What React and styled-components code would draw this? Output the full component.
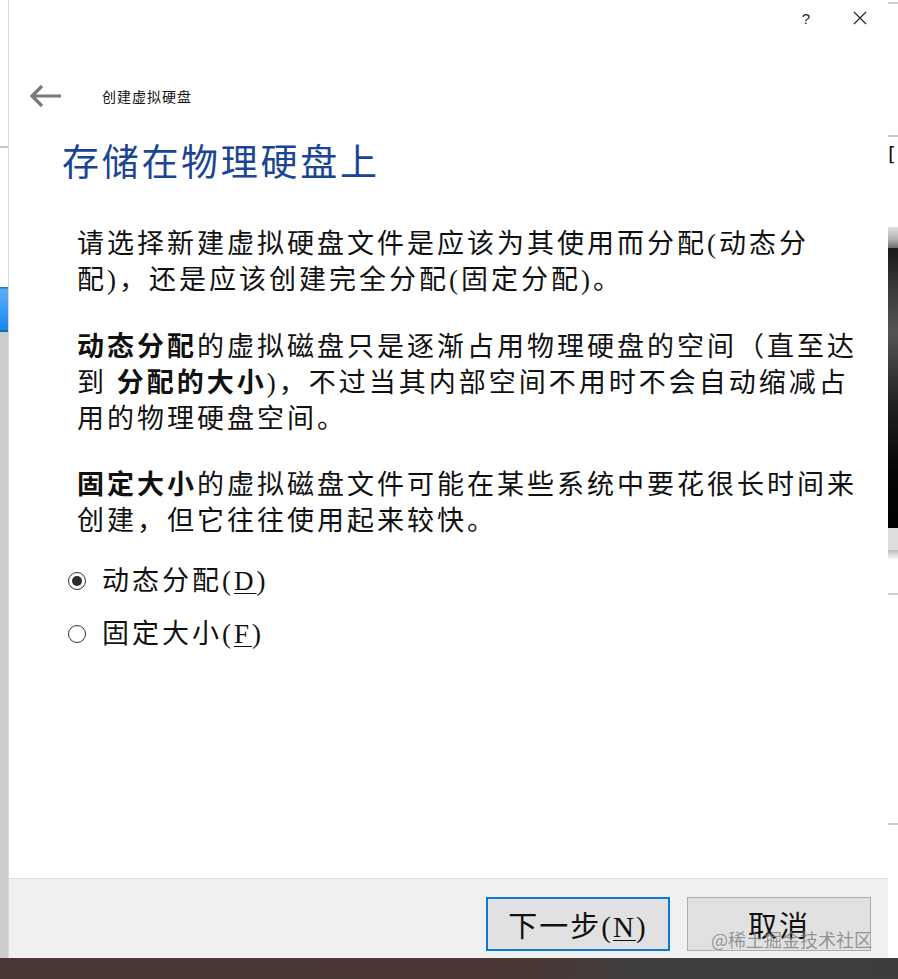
import React from 'react';
import styled, { createGlobalStyle } from 'styled-components';

const GlobalStyle = createGlobalStyle`
    html, body {
        margin: 0;
        padding: 0;
        background: #ffffff;
    }
    body {
        width: 898px;
        height: 979px;
        overflow: hidden;
        font-family: "Liberation Serif", "Noto Sans CJK SC", serif;
    }
`;

const Screen = styled.div`
    display: flex;
    flex-direction: column;
    width: 898px;
    height: 979px;
`;

const MainRow = styled.div`
    display: flex;
    height: 958px;
`;

const TaskBar = styled.div`
    height: 21px;
    background: linear-gradient(90deg, #4a3734 0%, #4b3633 55%, #403d3d 70%, #3f3c3c 100%);
`;

/* pieces of the windows lying behind the dialog */
const SideStrip = styled.div`
    display: flex;
    flex-direction: column;
    width: ${(p) => p.$w}px;
    flex-shrink: 0;
`;

const StripPiece = styled.div`
    height: ${(p) => p.$h}px;
    flex-shrink: 0;
    background: ${(p) => p.$bg || '#ffffff'};
`;

const StripFill = styled.div`
    flex: 1;
    background: ${(p) => p.$bg || '#ffffff'};
`;

const StripGlyph = styled.div`
    height: 34px;
    font-family: "DejaVu Sans", sans-serif;
    font-size: 20px;
    line-height: 34px;
    color: #111;
    overflow: hidden;
`;

const Dialog = styled.div`
    display: flex;
    flex-direction: column;
    width: 880px;
    flex-shrink: 0;
    background: #ffffff;
    border-left: 1px solid #d9d9d9;
    box-sizing: border-box;
`;

const Content = styled.div`
    flex: 1;
    display: flex;
    flex-direction: column;
`;

const TitleBar = styled.div`
    height: 36px;
    display: flex;
    align-items: center;
    justify-content: flex-end;
    padding-right: 21px;
    gap: 43px;
`;

const HelpMark = styled.span`
    font-family: "Liberation Sans", sans-serif;
    font-size: 15px;
    color: #222;
`;

const NavRow = styled.div`
    margin-top: 45px;
    height: 30px;
    display: flex;
    align-items: center;
    padding-left: 21px;
`;

const NavTitle = styled.span`
    margin-left: 40px;
    font-family: "Noto Sans CJK SC", sans-serif;
    font-size: 14px;
    letter-spacing: 1px;
    color: #111;
`;

const Heading = styled.h1`
    margin: 25px 0 0 53px;
    font-family: "Noto Sans CJK SC", serif;
    font-weight: 400;
    font-size: 37px;
    letter-spacing: 2.7px;
    line-height: 48px;
    color: #1a4592;
`;

const Body = styled.div`
    margin-top: 42px;
    padding-left: 68px;
    font-family: "Liberation Serif", "Noto Sans CJK SC", serif;
    font-size: 27px;
    letter-spacing: 3px;
    line-height: 36px;
    color: #111;
`;

const Para = styled.p`
    margin: 0 0 ${(p) => p.$gap ?? 31}px 0;
    white-space: nowrap;
    b {
        font-weight: 700;
    }
`;

const RadioGroup = styled.div`
    display: flex;
    flex-direction: column;
    gap: 17px;
    margin-top: 24px;
    margin-left: -9px;
`;

const RadioRow = styled.label`
    display: flex;
    align-items: center;
    height: 36px;
    gap: 16px;
`;

const RadioDot = styled.span`
    width: 18px;
    height: 18px;
    border-radius: 50%;
    border: 1px solid #333;
    box-sizing: border-box;
    display: flex;
    align-items: center;
    justify-content: center;
    background: #fff;
    &::after {
        content: '';
        width: 10px;
        height: 10px;
        border-radius: 50%;
        background: ${(p) => p.$checked ? '#2b2b2b' : 'transparent'};
    }
`;

const Key = styled.span`
    text-decoration: underline;
    text-underline-offset: 3px;
    text-decoration-thickness: 1px;
`;

const Footer = styled.div`
    position: relative;
    height: 80px;
    background: #f0f0f0;
    border-top: 1px solid #dfdfdf;
    box-sizing: border-box;
    display: flex;
    justify-content: flex-end;
    align-items: flex-start;
    padding: 18px 17px 0 0;
    gap: 17px;
`;

const Button = styled.button`
    width: 184px;
    height: 54px;
    box-sizing: border-box;
    background: #e1e1e1;
    border: ${(p) => p.$primary ? '2px solid #0a78d4' : '1px solid #adadad'};
    font-family: "Liberation Serif", "Noto Sans CJK SC", serif;
    font-size: 29px;
    letter-spacing: 2px;
    color: #111;
    padding: 0;
    cursor: pointer;
`;

const Watermark = styled.span`
    position: absolute;
    right: 16px;
    bottom: 6px;
    font-family: "Noto Sans CJK SC", sans-serif;
    font-size: 18px;
    color: rgba(120, 120, 120, 0.75);
    pointer-events: none;
`;

const BackArrow = () => (
    <svg width="32" height="24" viewBox="0 0 32 24">
        <path d="M31 12 H3 M12 2 L2 12 L12 22" fill="none" stroke="#7b7b7b" strokeWidth="3.2" />
    </svg>
);

const CloseIcon = () => (
    <svg width="14" height="14" viewBox="0 0 14 14">
        <path d="M1 1 L13 13 M13 1 L1 13" stroke="#222" strokeWidth="1.1" />
    </svg>
);

const App = () => (
    <>
        <GlobalStyle />
        <Screen>
            <MainRow>
                <SideStrip $w={8}>
                    <StripPiece $h={146} />
                    <StripPiece $h={2} $bg="#c9c9c9" />
                    <StripPiece $h={139} />
                    <StripPiece $h={45} $bg="linear-gradient(180deg, #2c6fb4 0%, #5aacf6 6%, #3c9cf4 50%, #1689ef 94%, #1c5e9c 100%)" />
                    <StripFill $bg="#cdcdcd" />
                </SideStrip>
                <Dialog>
                    <Content>
                        <TitleBar>
                            <HelpMark>?</HelpMark>
                            <CloseIcon />
                        </TitleBar>
                        <NavRow>
                            <BackArrow />
                            <NavTitle>创建虚拟硬盘</NavTitle>
                        </NavRow>
                        <Heading>存储在物理硬盘上</Heading>
                        <Body>
                            <Para>
                                请选择新建虚拟硬盘文件是应该为其使用而分配(动态分<br />
                                配)，还是应该创建完全分配(固定分配)。
                            </Para>
                            <Para $gap={30}>
                                <b>动态分配</b>的虚拟磁盘只是逐渐占用物理硬盘的空间（直至达<br />
                                到 <b>分配的大小</b>)，不过当其内部空间不用时不会自动缩减占<br />
                                用的物理硬盘空间。
                            </Para>
                            <Para $gap={0}>
                                <b>固定大小</b>的虚拟磁盘文件可能在某些系统中要花很长时间来<br />
                                创建，但它往往使用起来较快。
                            </Para>
                            <RadioGroup>
                                <RadioRow>
                                    <RadioDot $checked />
                                    <span>动态分配(<Key>D</Key>)</span>
                                </RadioRow>
                                <RadioRow>
                                    <RadioDot />
                                    <span>固定大小(<Key>F</Key>)</span>
                                </RadioRow>
                            </RadioGroup>
                        </Body>
                    </Content>
                    <Footer>
                        <Button $primary>下一步(<Key>N</Key>)</Button>
                        <Button>取消</Button>
                        <Watermark>@稀土掘金技术社区</Watermark>
                    </Footer>
                </Dialog>
                <SideStrip $w={10}>
                    <StripPiece $h={2} />
                    <StripPiece $h={2} $bg="#d0d0d0" />
                    <StripPiece $h={131} />
                    <StripPiece $h={2} $bg="#c9c9c9" />
                    <StripGlyph>[</StripGlyph>
                    <StripPiece $h={56} />
                    <StripPiece $h={21} $bg="linear-gradient(180deg, #e0e0e0 0%, #b0b0b0 60%, #6d6d6d 100%)" />
                    <StripPiece $h={280} $bg="linear-gradient(180deg, #1a1a1a 0%, #3a3a3a 15%, #555 30%, #222 55%, #050505 80%, #000 100%)" />
                    <StripPiece $h={22} $bg="#dddddd" />
                    <StripPiece $h={10} $bg="linear-gradient(180deg, #bbb, #fff)" />
                    <StripPiece $h={33} />
                    <StripPiece $h={2} $bg="#cfcfcf" />
                    <StripPiece $h={228} />
                    <StripPiece $h={2} $bg="#cfcfcf" />
                    <StripFill />
                </SideStrip>
            </MainRow>
            <TaskBar />
        </Screen>
    </>
);

export default App;
